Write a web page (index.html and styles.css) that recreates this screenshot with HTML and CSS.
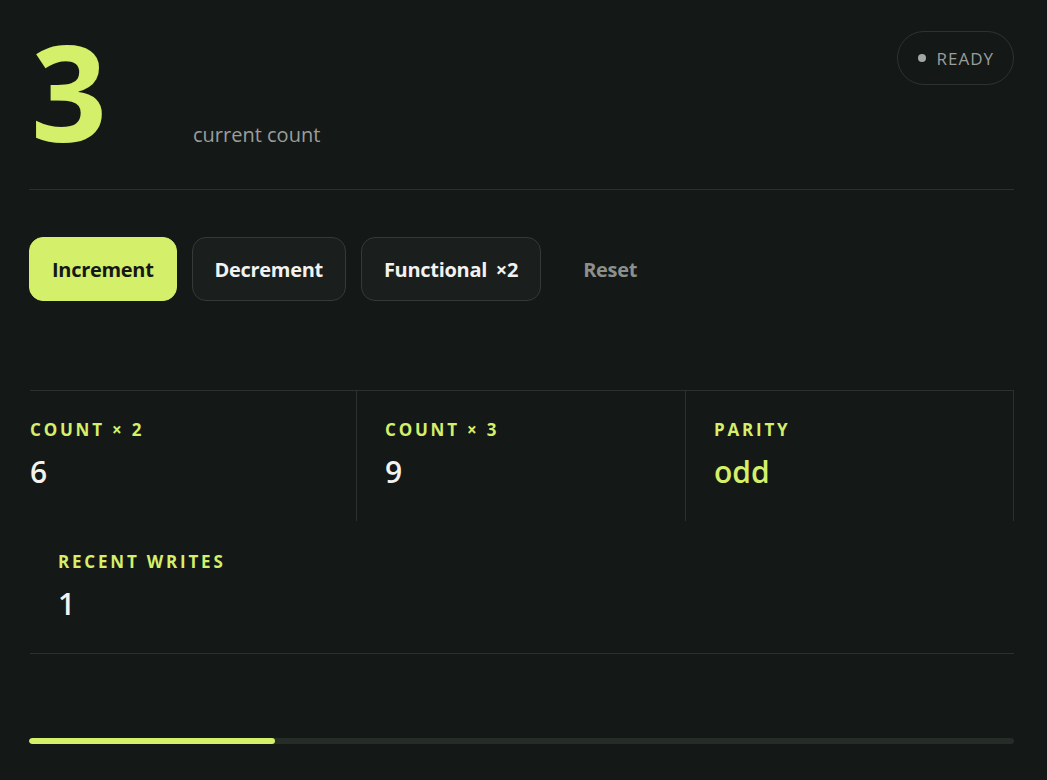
FILE: index.html
```html
<!DOCTYPE html>
<html lang="en">
<head>
  <meta charset="UTF-8">
  <title>Counter</title>
  <link rel="stylesheet" href="styles.css">
</head>
<body>
  <div class="app">
    <header class="head">
      <div class="count">
        <span class="count-num">3</span>
        <span class="count-label">current count</span>
      </div>
      <div class="status"><span class="status-dot"></span>READY</div>
    </header>

    <div class="actions">
      <button class="btn btn-primary">Increment</button>
      <button class="btn">Decrement</button>
      <button class="btn btn-fn">Functional ×2</button>
      <button class="btn btn-ghost">Reset</button>
    </div>

    <div class="stats">
      <div class="stat">
        <div class="stat-label">Count × 2</div>
        <div class="stat-value">6</div>
      </div>
      <div class="stat">
        <div class="stat-label">Count × 3</div>
        <div class="stat-value">9</div>
      </div>
      <div class="stat">
        <div class="stat-label">Parity</div>
        <div class="stat-value accent">odd</div>
      </div>
      <div class="stat stat-wide">
        <div class="stat-label">Recent writes</div>
        <div class="stat-value">1</div>
      </div>
    </div>

    <div class="progress"><div class="progress-fill" style="width: 25%;"></div></div>
  </div>
</body>
</html>
```

FILE: styles.css
```css
body {
  margin: 0;
  background-color: #141817;
  font-family: 'Open Sans', sans-serif;
  color: #f2f2f0;
}
.app {
  padding: 24px 33px 30px 29px;
}
.head {
  display: flex;
  justify-content: space-between;
  align-items: flex-start;
  padding-bottom: 32px;
  border-bottom: 1px solid #2c302e;
}
.count {
  display: flex;
  align-items: baseline;
  padding-left: 2px;
}
.count-num {
  font-size: 133px;
  font-weight: 700;
  line-height: 133px;
  color: #d4ef6a;
  width: 162px;
  letter-spacing: -2px;
}
.count-label {
  font-size: 20px;
  color: #9a9e9b;
}
.status {
  display: flex;
  align-items: center;
  gap: 10px;
  height: 52px;
  padding: 0 19px 0 20px;
  margin-top: 7px;
  border: 1px solid #2e3331;
  border-radius: 28px;
  font-size: 17px;
  letter-spacing: 1px;
  color: #9a9e9b;
}
.status-dot {
  width: 8px;
  height: 8px;
  border-radius: 50%;
  background-color: #a4a8a5;
}
.actions {
  display: flex;
  align-items: center;
  gap: 15px;
  margin-top: 47px;
}
.btn {
  height: 64px;
  padding: 0 22px;
  border: 1px solid #353a37;
  border-radius: 14px;
  background-color: #1a1e1c;
  color: #f2f2f0;
  font-family: 'Open Sans', sans-serif;
  font-size: 20px;
  font-weight: 700;
  letter-spacing: -0.3px;
  cursor: pointer;
}
.btn-primary {
  background-color: #d4ef6a;
  border-color: #d4ef6a;
  color: #141817;
}
.btn-fn {
  word-spacing: 4px;
}
.btn-ghost {
  background: none;
  border-color: transparent;
  color: #8b908c;
  padding: 0 26px;
}
.stats {
  display: grid;
  grid-template-columns: 327px 329px 1fr;
  margin-top: 89px;
  margin-left: 1px;
  border-top: 1px solid #2c302e;
  border-bottom: 1px solid #2c302e;
}
.stat {
  height: 130px;
  padding: 27px 28px 0;
  box-sizing: border-box;
  border-right: 1px solid #2c302e;
}
.stat:first-child {
  padding-left: 0;
}
.stat-wide {
  grid-column: 1 / -1;
  border-right: none;
  height: 132px;
  padding-top: 29px;
}
.stat-label {
  font-size: 17px;
  font-weight: 700;
  letter-spacing: 2.8px;
  text-transform: uppercase;
  color: #d4ef6a;
}
.stat-value {
  margin-top: 11px;
  font-size: 30px;
  font-weight: 600;
  line-height: 40px;
}
.accent {
  color: #d4ef6a;
}
.progress {
  margin-top: 84px;
  height: 6px;
  border-radius: 3px;
  background-color: #262c27;
  overflow: hidden;
}
.progress-fill {
  height: 100%;
  border-radius: 3px;
  background-color: #d4ef6a;
}
```
